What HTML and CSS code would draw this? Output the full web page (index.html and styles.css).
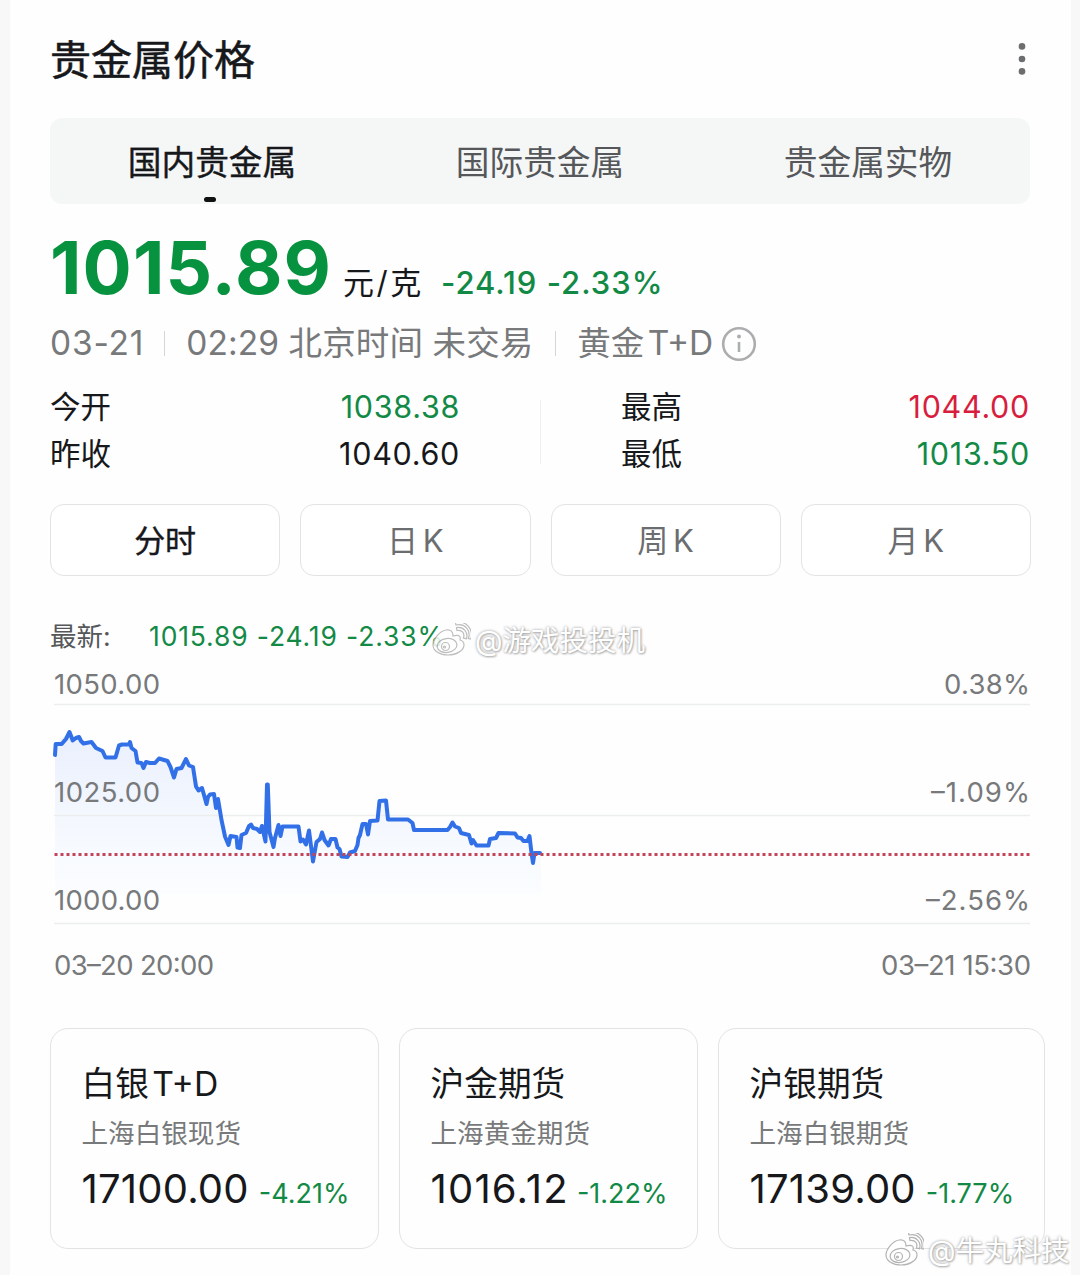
FILE: index.html
```
<!DOCTYPE html>
<html lang="zh-CN">
<head>
  <meta charset="UTF-8" />
  <meta name="viewport" content="width=device-width, initial-scale=1.0" />
  <title>贵金属价格</title>
  <link rel="stylesheet" href="styles.css">
</head>
<body>
  <main class="panel">
    <header class="header">
      <h1>贵金属价格</h1>
      <svg class="more" viewBox="0 0 8 34" width="8" height="34"><circle cx="4" cy="4.4" r="3.3"/><circle cx="4" cy="17" r="3.3"/><circle cx="4" cy="29.4" r="3.3"/></svg>
    </header>

    <nav class="tabs">
      <a class="tab active">国内贵金属</a>
      <a class="tab">国际贵金属</a>
      <a class="tab">贵金属实物</a>
    </nav>

    <section class="price">
      <strong>1015.89</strong>
      <span class="unit">元/克</span>
      <span class="change">-24.19 -2.33%</span>
    </section>

    <section class="meta">
      <span class="date">03-21</span>
      <i class="sep"></i>
      <span class="time">02:29 北京时间 未交易</span>
      <i class="sep sep-2"></i>
      <span class="kind">黄金 T+D</span>
      <svg class="info" viewBox="0 0 36 36" width="36" height="36"><circle cx="18" cy="18" r="15.8"/><path d="M18 16v10"/><circle class="dot" cx="18" cy="10.5" r="2"/></svg>
    </section>

    <section class="stats">
      <div class="col">
        <div class="stat"><span>今开</span><b class="down">1038.38</b></div>
        <div class="stat"><span>昨收</span><b>1040.60</b></div>
      </div>
      <div class="col">
        <div class="stat"><span>最高</span><b class="up">1044.00</b></div>
        <div class="stat"><span>最低</span><b class="down">1013.50</b></div>
      </div>
    </section>

    <div class="periods">
      <button class="active">分时</button>
      <button>日 K</button>
      <button>周 K</button>
      <button>月 K</button>
    </div>

    <div class="latest"><span>最新:</span><b>1015.89 -24.19 -2.33%</b></div>

    <svg class="chart" viewBox="50 660 982 330" width="982" height="330">
      <defs>
        <linearGradient id="area" x1="0" y1="730" x2="0" y2="895" gradientUnits="userSpaceOnUse">
          <stop offset="0" stop-color="#e9effd"/>
          <stop offset="0.5" stop-color="#f3f7fe"/>
          <stop offset="1" stop-color="#fbfdff"/>
        </linearGradient>
      </defs>
      <path class="area" d="M55 895V744L70 732 84 743 96 748 106 757 116 757 119 746 130 743 138 762 155 763 167 761 174 777 186 759 193 767 206 804 214 794 225 836 239 848 251 825 265 841 267 784 273 847 280 827 299 827 313 862 322 833 335 839 347 857 357 845 363 824 377 820 379 801 386 800 388 819 408 819 414 830 447 830 453 823 476 845 488 845 498 833 515 833 529 836 533 863 541 853V895Z"/>
      <path class="gridline" d="M54 704.5H1030M54 815.5H1030M54 923.5H1030"/>
      <g class="labels">
        <text x="54" y="693.5" textLength="106">1050.00</text>
        <text x="54" y="801.5" textLength="106">1025.00</text>
        <text x="54" y="909.5" textLength="106">1000.00</text>
        <text x="944" y="693.5" textLength="86">0.38%</text>
        <text x="931" y="801.5" textLength="99">–1.09%</text>
        <text x="926" y="909.5" textLength="104">–2.56%</text>
        <text x="54" y="974.5" textLength="160">03–20 20:00</text>
        <text x="881" y="974.5" textLength="150">03–21 15:30</text>
      </g>
      <polyline class="line" points="55,755 55.7,744 61.7,744 66,739 69.5,732 72.7,740.5 76,738 79,737 81,741 83.5,743.5 91.5,742 96,748 102.5,751 105.5,757.5 115.5,757.5 119,745.5 122,744.5 129,744.5 130,742 131.5,748 135.5,751 137.5,762.5 141.5,763 143.5,768 146,762 150,763 155,763 159,758.5 167.5,761 170.5,767 174,777.5 176.5,769 181.5,768 186,759 189,765.5 193,767 196,786.5 198.5,790.5 202,788 204,795 206.5,804 208,797 210,794.5 214,794 216,808 218,799 221.5,820 225,836.5 228.5,845 230.5,836 236.5,837 237.5,847.5 240,848 241.5,835 246,833 249,826 251,824.5 253,828 257,829 260,832 262,826 264,835 265.5,841.5 267,784.5 267.8,784.5 269.5,832 273.5,847 275,838 278.5,825 280.5,836 282.5,826.5 298.5,826.5 300.5,841.5 303,839.5 306,844.5 309,830.5 313,861.5 316.5,842 320,839 322,832.5 324.5,840 328.5,845.5 331,839 335.5,839 337.5,847.5 339.5,849 341.5,856.5 347.5,857 350,852.5 355,851 357.5,845 358.5,838 360,835 362.5,824 366,824 368,834.5 370,821 377.5,820.5 379.5,801 386,800.5 388,819.5 408,819.5 412.5,823 414,830 447.5,830 450,827 452.5,822.5 455,826.5 459,828 461,833 469,835 471.5,843.5 473,840 476.5,845.5 488.5,845.5 490,839 496,838 498.5,833 515,833.5 517.5,837.5 521,838 523.5,841 527.5,841 529.5,836 531.5,853 533,863 534.5,853 540,853"/>
      <path class="current" d="M54.5 854.5H1031"/>
    </svg>

    <section class="cards">
      <article class="card">
        <h2>白银 T+D</h2>
        <p>上海白银现货</p>
        <div class="quote"><b>17100.00</b><span>-4.21%</span></div>
      </article>
      <article class="card">
        <h2>沪金期货</h2>
        <p>上海黄金期货</p>
        <div class="quote wide"><b>1016.12</b><span>-1.22%</span></div>
      </article>
      <article class="card">
        <h2>沪银期货</h2>
        <p>上海白银期货</p>
        <div class="quote"><b>17139.00</b><span>-1.77%</span></div>
      </article>
    </section>
  </main>

  <svg width="0" height="0" class="symbols">
    <symbol id="weibo" viewBox="0 0 40 34">
      <path d="M15 7C9 8 2 16 2 22c0 6 7 10 15 10 9 0 16-5 16-10 0-3-2-4.500-4-5 1-3 0-6-7-4 0-4-2-7-7-6z"/>
      <ellipse cx="16" cy="22.500" rx="10" ry="7" transform="rotate(-8 16 22.500)"/>
      <circle cx="14.500" cy="23.500" r="4"/>
      <circle cx="13.500" cy="24" r="1"/>
      <path d="M26 7.500c5-1 8 3 6.500 7.500l3 .7c2-6-3-12.500-10-11zM25 2C34 0 40 7 37.500 15.500l2.500.7C42.500 6 35-3 24.500-.5z"/>
    </symbol>
  </svg>
  <div class="watermark wm-chart"><svg width="40" height="34"><use href="#weibo"/></svg><span>@游戏投投机</span></div>
  <div class="watermark wm-corner"><svg width="40" height="34"><use href="#weibo"/></svg><span>@牛丸科技</span></div>
</body>
</html>
```
FILE: styles.css
```
:root {
  --down:#128a46;
  --up:#d81e3f;
  --text:#17181b;
  --muted:#77797b;
  --line:#e2e3e4;
}
*{box-sizing:border-box;margin:0;padding:0}
body{position:relative;width:1080px;height:1275px;overflow:hidden;background:#f8f8f8;color:var(--text);font-family:Inter,"Noto Sans CJK SC",sans-serif;line-height:1.2}
b{font-weight:400}
.panel{width:1061px;height:1275px;margin-left:10px;padding:0 41px 0 40px;background:#fefefe}

.header{height:118px;display:flex;align-items:center;justify-content:space-between;padding-right:4px}
.header h1{padding-top:2px;font-size:41px;font-weight:400;line-height:60px;-webkit-text-stroke:.5px var(--text)}
.more{fill:#6c6d6f}

.tabs{display:grid;grid-template-columns:repeat(3,328px);width:980px;height:86px;border-radius:12px;background:#f5f7f7;overflow:hidden}
.tab{display:flex;align-items:center;justify-content:center;position:relative;right:2px;padding-top:4px;font-size:33.7px;color:#55575a}
.tab.active{color:var(--text);-webkit-text-stroke:.4px var(--text)}
.tab.active::after{content:"";position:absolute;left:156px;bottom:2px;width:12px;height:5px;border-radius:3px;background:#111}

.price{display:flex;align-items:baseline;height:108px;padding-top:20px;white-space:nowrap}
.price strong{width:293px;font-size:73px;font-weight:700;line-height:88px;letter-spacing:1.1px;color:#06923e}
.unit{width:98px;font-size:31px;letter-spacing:2.5px}
.change{font-size:31px;font-weight:500;letter-spacing:1px;color:var(--down)}

.meta{display:flex;align-items:center;height:62px;padding-top:1px;font-size:33.5px;color:var(--muted);white-space:nowrap}
.date{letter-spacing:.8px}
.time{letter-spacing:.1px}
.sep{width:1px;height:25px;background:#d5d6d7;margin:0 21px 0 20px}
.sep-2{margin-left:22px}
.kind{word-spacing:-6px}
.info{margin-left:8px;fill:none;stroke:#acadae;stroke-width:2.6}
.info .dot{fill:#acadae;stroke:none}

.stats{display:grid;grid-template-columns:410px 409px;justify-content:space-between;height:94px;margin-top:8px;background:linear-gradient(#eff0f0,#eff0f0) 490px 18px/1px 64px no-repeat}
.stat{display:flex;align-items:center;justify-content:space-between;height:47px;padding-top:3px;font-size:30.5px}
.stat b{letter-spacing:.7px}
.down{color:var(--down)}
.up{color:var(--up)}

.periods{display:grid;grid-template-columns:repeat(4,1fr);gap:20px;width:981px;margin-top:28px}
.periods button{height:72px;padding-top:2px;border:1.5px solid var(--line);border-radius:14px;background:#fff;font:400 31px/1.2 Inter,"Noto Sans CJK SC",sans-serif;word-spacing:-4px;color:#6b6d70}
.periods .active{color:var(--text);-webkit-text-stroke:.4px var(--text)}

.latest{display:flex;align-items:center;height:40px;margin-top:40px;padding-top:2px;font-size:26.5px;color:#55575a}
.latest span{width:99px}
.latest b{letter-spacing:.85px;color:var(--down)}

.chart{display:block;margin-top:4px;overflow:visible}
.area{fill:url(#area)}
.gridline{stroke:#ecedee;stroke-width:1.5}
.labels{font-size:27.5px;fill:#77797b}
.line{fill:none;stroke:#3270e8;stroke-width:4;stroke-linejoin:round;stroke-linecap:round}
.current{stroke:#c34459;stroke-width:3;stroke-dasharray:3 3}

.cards{display:grid;grid-template-columns:329px 299px 327px;gap:20px;width:995px;margin-top:38px}
.card{height:221px;padding:31px 0 0 30.5px;border:1.5px solid var(--line);border-radius:18px}
.card h2{height:48px;font-size:33.7px;font-weight:400;line-height:48px;word-spacing:-6px}
.card p{height:50px;font-size:26.6px;line-height:50px;color:var(--muted)}
.quote{display:flex;align-items:baseline;gap:10px;line-height:62px;white-space:nowrap}
.quote b{font-size:40px;letter-spacing:.2px}
.quote span{font-size:27px;color:var(--down)}
.quote.wide{gap:8px}
.quote.wide b{letter-spacing:1.2px}

.symbols{position:absolute}
.watermark{position:absolute;display:flex;align-items:center;gap:4px;font-size:28.5px;color:#fff;white-space:nowrap;text-shadow:0 0 3px #999,1px 1px 2px #bbb}
.watermark span{padding-top:3px}
.watermark svg{fill:#fff;stroke:#b3b3b3;stroke-width:1.2;overflow:visible}
.wm-chart{left:431px;top:621px}
.wm-chart svg{opacity:.85}
.wm-corner{left:884px;top:1231px}
```
